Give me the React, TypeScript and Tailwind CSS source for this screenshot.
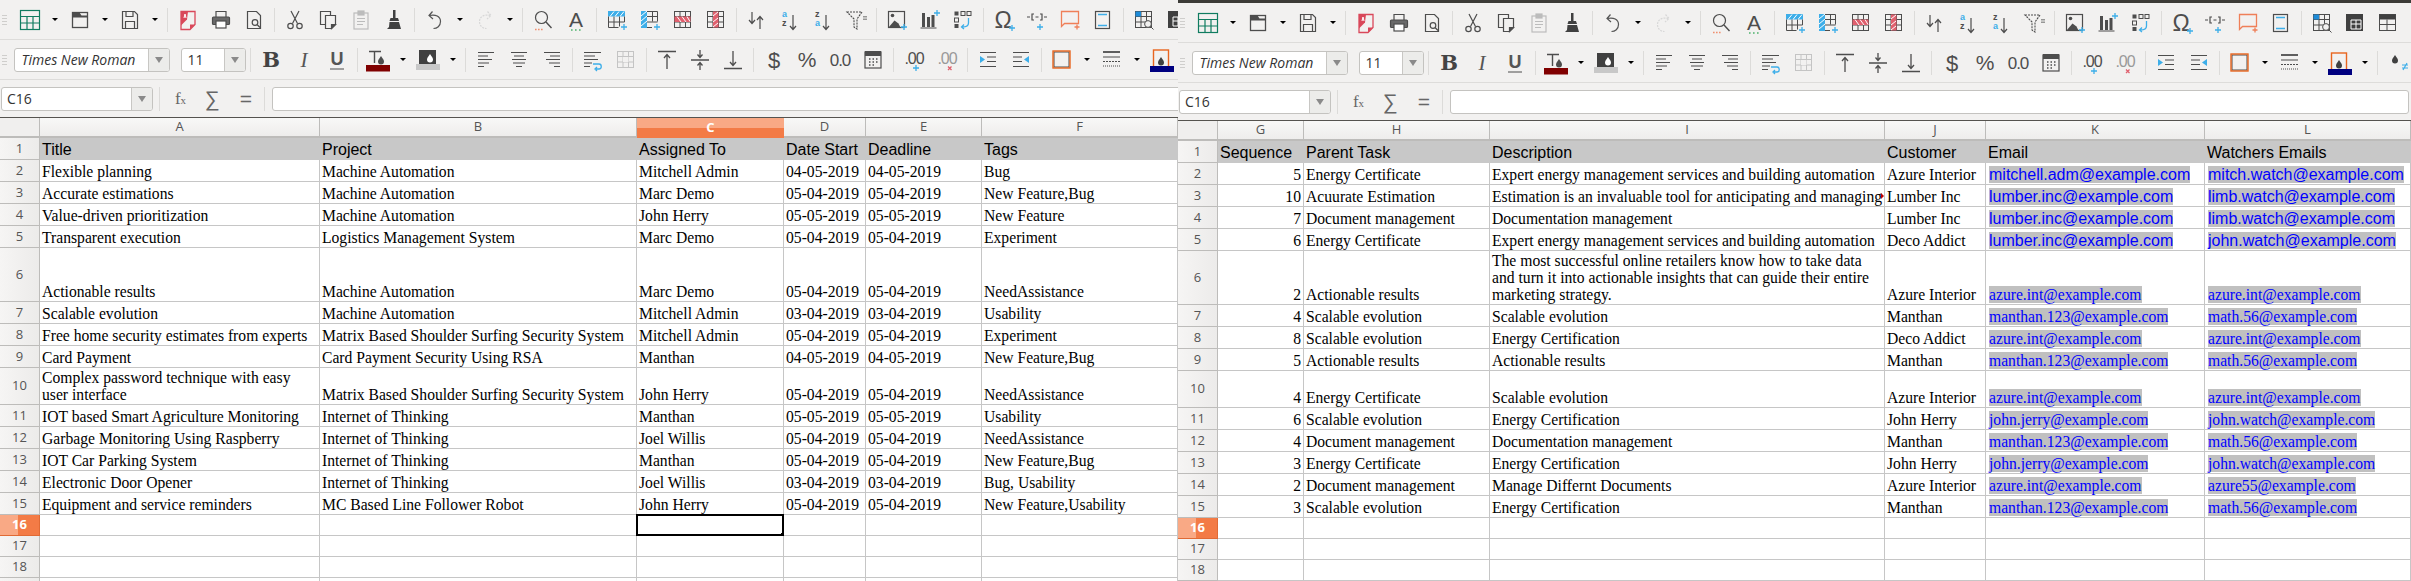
import type { ReactNode } from "react"

const D = "#4d4d4d"
const B = "#3daee9"
const R = "#e0606e"

const Plus = ({ x, y }: { x: number; y: number }) => (
  <path d={`M${x - 3} ${y}h6M${x} ${y - 3}v6`} stroke={B} strokeWidth="1.3" fill="none" />
)

const Gridlines = ({ color = D }: { color?: string }) => (
  <g stroke={color} strokeWidth="1" fill="none">
    <rect x="3.5" y="3.5" width="16" height="16" />
    <path d="M3.5 8.5h16M3.5 14h16M9 3.5v16M14.5 3.5v16" />
  </g>
)

const Lines = ({ rows }: { rows: string[] }) => (
  <path d={rows.join("")} stroke={D} strokeWidth="1.2" fill="none" />
)

const Drop = ({ x, y, c }: { x: number; y: number; c: string }) => (
  <path d={`M${x} ${y}c2 3 3 4 3 5.500a3 3 0 0 1-6 0c0-1.500 1-2.500 3-5.500z`} fill={c} />
)

const icons: Record<string, ReactNode> = {
  table: (
    <g stroke="#107c60" strokeWidth="1.2" fill="none">
      <rect x="2.500" y="2.500" width="19" height="19" />
      <path d="M2.500 8.500h19M2.500 15h19M9 8.500v13M15 8.500v13" />
    </g>
  ),
  open: (
    <g>
      <rect x="4.500" y="4.500" width="15" height="15" stroke={D} fill="none" strokeWidth="1.300" />
      <path d="M4.500 4.500h7l2 3h6v2h-15z" fill={D} />
    </g>
  ),
  save: (
    <g stroke={D} strokeWidth="1.200" fill="none">
      <path d="M4.500 3.500h12l3 3v14h-15z" />
      <path d="M8 3.500v5h7v-5M7.500 20.500v-7h9v7" />
    </g>
  ),
  pdf: (
    <g>
      <path d="M5 3.500h14v13l-5 5H5z" fill="none" stroke="#d9485a" strokeWidth="1.300" />
      <path d="M5 3.500h7l-1 8-6 6z" fill="#d9485a" />
      <path d="M8 10l1-4 1 4" stroke="#fff" fill="none" />
      <path d="M14 21.500v-5h5z" fill="#d9485a" />
    </g>
  ),
  print: (
    <g stroke={D} strokeWidth="1.200" fill="none">
      <path d="M7 9V3.500h10V9" />
      <rect x="3.500" y="9" width="17" height="7.500" rx="1" fill="#6a6a6a" />
      <rect x="7" y="13" width="10" height="7" fill="#fff" />
    </g>
  ),
  preview: (
    <g stroke={D} strokeWidth="1.200" fill="none">
      <path d="M5.500 3.500h9l4 4v13h-13z" />
      <circle cx="13" cy="14.500" r="2.800" />
      <path d="M15 16.500l3 3" />
    </g>
  ),
  cut: (
    <g stroke={D} strokeWidth="1.200" fill="none">
      <path d="M8 3l6.500 12.500M16 3L9.500 15.500" />
      <circle cx="7.500" cy="18" r="2.700" />
      <circle cx="16.500" cy="18" r="2.700" />
    </g>
  ),
  copy: (
    <g stroke={D} strokeWidth="1.200" fill="none">
      <path d="M9 16.500H4.500v-13h10v4" />
      <path d="M9.500 7.500h10v9l-4 4h-6z" fill="#f2f1f0" />
      <path d="M15.500 20.500v-4h4z" fill={D} />
    </g>
  ),
  paste: (
    <g stroke="#bcbcbc" strokeWidth="1.200" fill="none">
      <rect x="5" y="5" width="14" height="16" />
      <rect x="9" y="3" width="6" height="4" fill="#bcbcbc" />
      <path d="M8 10.500h8M8 13.500h8M8 16.500h6" />
    </g>
  ),
  clone: (
    <g fill="#404040">
      <rect x="11" y="2" width="2.500" height="8" />
      <path d="M8.500 10h7.500l1 3H7.500z" />
      <path d="M7.500 14H17l2 7H5l2-2z" />
    </g>
  ),
  undo: <path d="M9.500 3.500L6 7.500l4 3.500M6.500 7.500c6-1.500 11 1 11 6 0 4.500-3.500 7-7 7" stroke="#555" strokeWidth="1.200" fill="none" />,
  redo: <path d="M14.500 3.500L18 7.500l-4 3.500M17.500 7.500c-6-1.500-11 1-11 6 0 4.500 3.500 7 7 7" stroke="#d8d8d8" strokeWidth="1.200" fill="none" strokeDasharray="2 1" />,
  find: (
    <g>
      <circle cx="10.500" cy="9.500" r="6" stroke={D} strokeWidth="1.200" fill="none" />
      <path d="M15 14l5.500 6" stroke={D} strokeWidth="1.400" />
      <path d="M4 21.500h1.600M7 21.500h1.600M10 21.500h1.600" stroke="#f0906f" strokeWidth="1.600" />
    </g>
  ),
  spell: (
    <g>
      <text x="12" y="19" textAnchor="middle" fontSize="21" fontFamily="Liberation Sans" fill={D}>A</text>
      <path d="M7 22h1.600M11 22h1.600M15 22h1.600" stroke="#4fb36d" strokeWidth="1.600" />
    </g>
  ),
  rowIns: (
    <g>
      <rect x="3" y="3" width="17" height="5.500" fill={B} />
      <path d="M5 8.500l4-5M10 8.500l4-5M15 8.500l4-5" stroke="#fff" />
      <path d="M3.500 8.500v11h10M19.500 8.500V14M3.500 14h16M9 8.500v11M14.500 8.500v10" stroke={D} fill="none" />
      <Plus x={19} y={19} />
    </g>
  ),
  colIns: (
    <g>
      <rect x="3" y="3" width="6" height="17" fill={B} />
      <path d="M3 8l6-5M3 13l6-5M3 18l6-5" stroke="#fff" />
      <path d="M9 3.500h10.500v10M9 19.500h5M9 8.500h10.500M9 14h10.500M14.500 3.500v10" stroke={D} fill="none" />
      <Plus x={19} y={19} />
    </g>
  ),
  rowDel: (
    <g>
      <Gridlines />
      <rect x="3.500" y="8.500" width="16" height="5.500" fill={R} />
      <path d="M6 8.500l4 5.500M11 8.500l4 5.500M16 8.500l3 5" stroke="#fff" />
    </g>
  ),
  colDel: (
    <g>
      <Gridlines />
      <rect x="9" y="3.500" width="5.500" height="16" fill={R} />
      <path d="M9 8l5-4M9 14l5-4M9 19l5-4" stroke="#fff" />
    </g>
  ),
  sort: <path d="M7 4v11M4 12l3 3.500 3-3.500M15 21V9M12 12l3-3.500 3 3.500" stroke={D} strokeWidth="1.200" fill="none" />,
  sortAz: (
    <g fontFamily="Liberation Sans" fontSize="9" fontWeight="700">
      <text x="4" y="9" fill={B}>a</text>
      <text x="4" y="18" fill={D}>z</text>
      <path d="M15 7v14M12 18l3 3.500 3-3.500" stroke={D} strokeWidth="1.200" fill="none" />
    </g>
  ),
  sortZa: (
    <g fontFamily="Liberation Sans" fontSize="9" fontWeight="700">
      <text x="4" y="9" fill={D}>z</text>
      <text x="4" y="18" fill={B}>a</text>
      <path d="M15 7v14M12 18l3 3.500 3-3.500" stroke={D} strokeWidth="1.200" fill="none" />
    </g>
  ),
  filter: (
    <g stroke={D} strokeWidth="1.100" fill="none">
      <path d="M3 4h15l-5 7v10l-3-2v-8z" strokeDasharray="2 1" />
      <path d="M20 8v4M22 8v4" strokeDasharray="1.500 1" />
    </g>
  ),
  image: (
    <g>
      <rect x="3.500" y="3.500" width="16" height="16" stroke={D} fill="none" strokeWidth="1.200" />
      <circle cx="7.500" cy="7.500" r="1.800" fill={D} />
      <path d="M3.500 19.500l6-7 4 3 2 4z" fill={D} />
      <Plus x={19} y={19} />
    </g>
  ),
  chart: (
    <g fill={D}>
      <rect x="4" y="5" width="3" height="14" />
      <rect x="9" y="9" width="3" height="10" />
      <rect x="13.500" y="7" width="3" height="12" />
      <rect x="2.500" y="19.500" width="16" height="1" />
      <Plus x={19} y={5} />
    </g>
  ),
  pivot: (
    <g fill={D}>
      <rect x="3.500" y="3.500" width="4" height="4" />
      <rect x="10" y="3.500" width="4" height="4" stroke={D} fill="none" />
      <rect x="16" y="3.500" width="4" height="4" stroke={D} fill="none" />
      <rect x="3.500" y="10" width="4" height="4" stroke={D} fill="none" />
      <rect x="3.500" y="16" width="4" height="4" />
      <path d="M17.500 10v5c0 3-2 4-6 4M13 16.500l-2.500 2.500 2.500 2" stroke={B} strokeWidth="1.300" fill="none" />
    </g>
  ),
  omega: (
    <g>
      <text x="11" y="20" textAnchor="middle" fontSize="23" fontFamily="Liberation Sans" fill={D}>Ω</text>
      <Plus x={20} y={20} />
    </g>
  ),
  link: (
    <g>
      <path d="M2 9h3M19 9h3M9 6H7v6h2M15 6h2v6h-2M10.500 9h3" stroke={D} strokeWidth="1.200" fill="none" />
      <Plus x={15} y={19} />
    </g>
  ),
  comment: (
    <g>
      <path d="M3.500 3.500h17v12h-14l-3 3z" stroke="#ef7f58" strokeWidth="1.300" fill="none" />
      <path d="M16.500 19h5M19 16.500v5" stroke="#ef7f58" strokeWidth="1.300" />
    </g>
  ),
  headerfoot: (
    <g>
      <rect x="4.500" y="3.500" width="14" height="17" stroke={D} strokeWidth="1.200" fill="none" />
      <path d="M7 6.500h9M7 17.500h9" stroke={B} strokeWidth="1.300" />
    </g>
  ),
  defname: (
    <g>
      <Gridlines />
      <rect x="3.500" y="3.500" width="5.500" height="5" fill="#1e8bd8" />
      <circle cx="16" cy="16" r="3.400" stroke={D} fill="#f2f1f0" />
      <path d="M18.500 18.500l3 3" stroke={D} />
    </g>
  ),
  freeze: (
    <g>
      <rect x="3" y="3" width="17" height="17" fill="#404040" />
      <path d="M8 9h10v9H8zM8 13h10M13 9v9" stroke="#fff" fill="none" />
    </g>
  ),
  split: (
    <g>
      <rect x="3.500" y="3.500" width="16" height="16" stroke={D} fill="none" />
      <rect x="3.500" y="3.500" width="16" height="5" fill="#404040" />
      <path d="M3.500 13.500h16M11 8.500v11" stroke={D} />
    </g>
  ),
  bold: <text x="12" y="19" textAnchor="middle" fontSize="21" fontWeight="700" fontFamily="DejaVu Serif" fill="#444">B</text>,
  italic: <text x="12" y="19" textAnchor="middle" fontSize="21" fontStyle="italic" fontFamily="Liberation Serif" fill="#555">I</text>,
  underline: (
    <g>
      <text x="12" y="17" textAnchor="middle" fontSize="18" fontWeight="700" fontFamily="Liberation Sans" fill="#555">U</text>
      <path d="M5 21h14" stroke={D} />
    </g>
  ),
  fontColor: (
    <g>
      <path d="M3 3.500h12M8.500 3.500V15" stroke={D} strokeWidth="1.400" />
      <Drop x={15} y={8} c={D} />
      <rect x="0" y="17" width="24" height="6.500" fill="#800000" />
    </g>
  ),
  bgColor: (
    <g>
      <rect x="3" y="2" width="17" height="14" fill="#404040" />
      <Drop x={14} y={6} c="#fff" />
      <rect x="0" y="16" width="24" height="6" fill="#c8c8c8" />
    </g>
  ),
  left: <Lines rows={["M4 4.500h16", "M4 8h10", "M4 11.500h14", "M4 15h11", "M4 18.500h6"]} />,
  center: <Lines rows={["M4 4.500h16", "M7 8h10", "M5 11.500h14", "M6 15h12", "M9 18.500h6"]} />,
  right: <Lines rows={["M4 4.500h16", "M10 8h10", "M6 11.500h14", "M9 15h11", "M14 18.500h6"]} />,
  wrap: (
    <g>
      <Lines rows={["M3 4.500h17", "M3 8h11", "M3 11.500h14", "M3 15h8", "M3 18.500h6"]} />
      <path d="M12 16h6c3 0 3 5 0 5h-3M16 19l-2 2 2 2" stroke={B} strokeWidth="1.300" fill="none" />
    </g>
  ),
  merge: (
    <g>
      <Gridlines color="#c4c4c4" />
      <path d="M9 9h5.500v5H9z" fill="#f2f1f0" />
    </g>
  ),
  vtop: <path d="M3 3.500h18M12 21V7M9 10l3-3.500 3 3.500" stroke={D} strokeWidth="1.300" fill="none" />,
  vmid: <path d="M3 12h18M12 2v7M9.500 6.500L12 9.500l2.500-3M12 22v-7M9.500 17.500l2.500-3 2.500 3" stroke={D} strokeWidth="1.300" fill="none" />,
  vbot: <path d="M3 20.500h18M12 3v14M9 14l3 3.500 3-3.500" stroke={D} strokeWidth="1.300" fill="none" />,
  dollar: <text x="12" y="20" textAnchor="middle" fontSize="22" fontFamily="Liberation Sans" fill={D}>$</text>,
  percent: <text x="12" y="19" textAnchor="middle" fontSize="21" fontFamily="Liberation Sans" fill={D}>%</text>,
  number: <text x="12" y="18" textAnchor="middle" fontSize="17" letterSpacing="-1" fontFamily="Liberation Sans" fill={D}>0.0</text>,
  date: (
    <g>
      <rect x="4" y="4" width="16" height="16" stroke={D} strokeWidth="1.200" fill="none" />
      <rect x="4" y="3" width="16" height="5" fill={D} />
      <path d="M8 11h1.500M11.500 11H13M15 11h1.500M8 14h1.500M11.500 14H13M15 14h1.500M8 17h1.500M11.500 17H13" stroke={D} strokeWidth="1.500" />
    </g>
  ),
  addDec: (
    <g>
      <text x="12" y="16" textAnchor="middle" fontSize="16" letterSpacing="-1" fontFamily="Liberation Sans" fill={D}>.00</text>
      <Plus x={14} y={20} />
    </g>
  ),
  delDec: (
    <g>
      <text x="12" y="16" textAnchor="middle" fontSize="16" letterSpacing="-1" fontFamily="Liberation Sans" fill="#999">.00</text>
      <path d="M13 18.500l3.500 3.500M16.500 18.500L13 22" stroke="#e0606e" strokeWidth="1.300" />
    </g>
  ),
  indent: (
    <g>
      <Lines rows={["M4 4.500h16", "M11 9h9", "M11 13.500h9", "M4 18.500h16"]} />
      <path d="M4 8l5 3.500-5 3.500z" fill={B} />
    </g>
  ),
  outdent: (
    <g>
      <Lines rows={["M4 4.500h16", "M4 9h9", "M4 13.500h9", "M4 18.500h16"]} />
      <path d="M20 8l-5 3.500 5 3.500z" fill={B} />
    </g>
  ),
  border: (
    <g>
      <rect x="4" y="4" width="15" height="15" fill="none" stroke={D} />
      <rect x="3" y="3" width="17" height="17" fill="none" stroke="#e8651f" strokeWidth="1.400" />
    </g>
  ),
  lineStyle: (
    <g>
      <path d="M3 4h17" stroke={D} strokeWidth="1.800" />
      <path d="M3 9h17" stroke={D} />
      <path d="M3 13.500h17" stroke={D} strokeDasharray="2 1" />
      <path d="M3 18h17" stroke={D} strokeDasharray="1 1" />
    </g>
  ),
  cellBg: (
    <g>
      <rect x="3.500" y="2" width="15" height="17" fill="none" stroke="#e8651f" strokeWidth="1.400" />
      <Drop x={11} y={9} c="#404040" />
      <rect x="0" y="18" width="24" height="6" fill="#000080" />
    </g>
  ),
  cond: (
    <g>
      <Drop x={9} y={4} c="#404040" />
      <path d="M16 14h6M16 17h6M21 12l-4 7" stroke={B} strokeWidth="1.200" fill="none" />
    </g>
  ),
}

const topBar = [
  "table", "dd", "open", "dd", "save", "dd", "sep", "pdf", "print", "preview", "sep", "cut", "copy", "paste", "clone", "sep",
  "undo", "dd", "redo", "dd", "sep", "find", "spell", "sep", "rowIns", "colIns", "rowDel", "colDel", "sep",
  "sort", "sortAz", "sortZa", "filter", "sep", "image", "chart", "pivot", "sep", "omega", "link", "comment", "headerfoot", "sep",
  "defname", "freeze", "split",
]

const formatBar = [
  "bold", "italic", "underline", "sep", "fontColor", "dd", "bgColor", "dd", "sep", "left", "center", "right", "sep", "wrap", "merge", "sep",
  "vtop", "vmid", "vbot", "sep", "dollar", "percent", "number", "date", "sep", "addDec", "delDec", "sep", "indent", "outdent", "sep",
  "border", "dd", "lineStyle", "dd", "cellBg", "dd", "sep", "cond",
]

function ToolItem({ name }: { name: string }) {
  if (name === "sep") {
    return (
      <div className="w-[8px] shrink-0 flex justify-center">
        <div className="w-px h-[24px] bg-[#dcdbd9]" />
      </div>
    )
  }
  if (name === "dd") {
    return (
      <div className="w-[17px] shrink-0 flex justify-center">
        <div className="w-0 h-0 border-l-[3px] border-r-[3px] border-t-[3px] border-l-transparent border-r-transparent border-t-black" />
      </div>
    )
  }
  return (
    <div className="w-[33px] shrink-0 flex justify-center">
      <svg width="24" height="24" viewBox="0 0 24 24" className="block overflow-visible">{icons[name]}</svg>
    </div>
  )
}

function Grip() {
  return (
    <div className="w-[13.5px] shrink-0 flex flex-col gap-[2px] items-start pl-[2px]">
      <div className="w-[5px] h-px bg-[#cfcecc]" />
      <div className="w-[5px] h-px bg-[#cfcecc]" />
      <div className="w-[5px] h-px bg-[#cfcecc]" />
      <div className="w-[5px] h-px bg-[#cfcecc]" />
    </div>
  )
}

function ComboArrow({ w }: { w: string }) {
  return (
    <div className={`${w} self-stretch flex items-center justify-center border-l border-[#c8c7c4] bg-[#ececea]`}>
      <div className="w-0 h-0 border-l-[4px] border-r-[4px] border-t-[6px] border-l-transparent border-r-transparent border-t-[#8a8a8a]" />
    </div>
  )
}

function Toolbars({ clipInput }: { clipInput: boolean }) {
  return (
    <div className="bg-[#f2f1f0] font-['Open_Sans',sans-serif]">
      <div className="h-[40px] flex items-center border-b border-[#dddcda] overflow-hidden">
        <Grip />
        {topBar.map((name, i) => (
          <ToolItem key={i} name={name} />
        ))}
      </div>
      <div className="h-[40px] flex items-center border-b border-[#dddcda] overflow-hidden">
        <Grip />
        <div className="w-[156px] h-[24px] shrink-0 flex items-center bg-white border border-[#c4c3c0] rounded-[3px] overflow-hidden">
          <span className="flex-1 pl-[7px] text-[14px] italic text-[#333] whitespace-nowrap">Times New Roman</span>
          <ComboArrow w="w-[21px]" />
        </div>
        <div className="w-[65px] h-[24px] ml-[11px] shrink-0 flex items-center bg-white border border-[#c4c3c0] rounded-[3px] overflow-hidden">
          <span className="flex-1 pl-[6px] text-[14px] text-[#333]">11</span>
          <ComboArrow w="w-[21px]" />
        </div>
        <div className="w-[9px] shrink-0 flex justify-center">
          <div className="w-px h-[24px] bg-[#dcdbd9]" />
        </div>
        {formatBar.map((name, i) => (
          <ToolItem key={i} name={name} />
        ))}
      </div>
      <div className="h-[37px] flex items-center pl-px overflow-hidden">
        <div className="w-[152px] h-[24px] shrink-0 flex items-center bg-white border border-[#c4c3c0] rounded-[3px] overflow-hidden">
          <span className="flex-1 pl-[5px] text-[14px] text-[#333]">C16</span>
          <ComboArrow w="w-[21px]" />
        </div>
        <div className="w-px h-[24px] ml-[6px] shrink-0 bg-[#dcdbd9]" />
        <div className="w-[41px] shrink-0 text-center text-[#666] text-[17px] leading-none font-['Liberation_Serif',serif]">
          f<span className="text-[11px]">x</span>
        </div>
        <div className="w-[22px] shrink-0 text-center text-[#666] text-[21px] leading-none font-['Liberation_Sans',sans-serif]">∑</div>
        <div className="w-[41px] shrink-0 pl-[5px] text-center text-[#666] text-[21px] leading-none font-['Liberation_Sans',sans-serif]">=</div>
        <div className="w-px h-[24px] shrink-0 bg-[#dcdbd9]" />
        {clipInput ? (
          <div className="w-[1000px] shrink-0 h-[24px] ml-[7px] bg-white border border-[#c4c3c0] rounded-[3px]" />
        ) : (
          <div className="flex-1 h-[24px] ml-[7px] mr-[2px] bg-white border border-[#c4c3c0] rounded-[3px]" />
        )}
      </div>
    </div>
  )
}

type Row = { h: string; cells: ReactNode[] }

const SERIF = "font-['Liberation_Serif',serif] text-[15.65px]"
const SANS = "font-['Liberation_Sans',sans-serif] text-[16px]"

const Mail = ({ v, sans }: { v: string; sans?: boolean }) => (
  <span className={`inline-block ml-px bg-[#c0c0c0] text-[#0000ff] leading-[17px] ${sans ? SANS : SERIF}`}>{v}@example.com</span>
)

const Num = ({ v }: { v: number }) => <span className="block w-full text-right">{v}</span>

const H22 = "h-[22px]"

const leftCols = ["w-[280px]", "w-[317px]", "w-[147px]", "w-[82px]", "w-[116px]", "w-[196px]"]
const rightCols = ["w-[86px]", "w-[186px]", "w-[395px]", "w-[101px]", "w-[219px]", "w-[206px]"]

const leftRows: Row[] = [
  { h: H22, cells: ["Flexible planning", "Machine Automation", "Mitchell Admin", "04-05-2019", "04-05-2019", "Bug"] },
  { h: H22, cells: ["Accurate estimations", "Machine Automation", "Marc Demo", "05-04-2019", "05-04-2019", "New Feature,Bug"] },
  { h: H22, cells: ["Value-driven prioritization", "Machine Automation", "John Herry", "05-05-2019", "05-05-2019", "New Feature"] },
  { h: H22, cells: ["Transparent execution", "Logistics Management System", "Marc Demo", "05-04-2019", "05-04-2019", "Experiment"] },
  { h: "h-[54px]", cells: ["Actionable results", "Machine Automation", "Marc Demo", "05-04-2019", "05-04-2019", "NeedAssistance"] },
  { h: H22, cells: ["Scalable evolution", "Machine Automation", "Mitchell Admin", "03-04-2019", "03-04-2019", "Usability"] },
  { h: H22, cells: ["Free home security estimates from experts", "Matrix Based Shoulder Surfing Security System", "Mitchell Admin", "05-04-2019", "05-04-2019", "Experiment"] },
  { h: H22, cells: ["Card Payment", "Card Payment Security Using RSA", "Manthan", "04-05-2019", "04-05-2019", "New Feature,Bug"] },
  {
    h: "h-[37px]",
    cells: [
      <>Complex password technique with easy<br />user interface</>,
      "Matrix Based Shoulder Surfing Security System", "John Herry", "05-04-2019", "05-04-2019", "NeedAssistance",
    ],
  },
  { h: H22, cells: ["IOT based Smart Agriculture Monitoring", "Internet of Thinking", "Manthan", "05-05-2019", "05-05-2019", "Usability"] },
  { h: H22, cells: ["Garbage Monitoring Using Raspberry", "Internet of Thinking", "Joel Willis", "05-04-2019", "05-04-2019", "NeedAssistance"] },
  { h: H22, cells: ["IOT Car Parking System", "Internet of Thinking", "Manthan", "05-04-2019", "05-04-2019", "New Feature,Bug"] },
  { h: H22, cells: ["Electronic Door Opener", "Internet of Thinking", "Joel Willis", "03-04-2019", "03-04-2019", "Bug, Usability"] },
  { h: H22, cells: ["Equipment and service reminders", "MC Based Line Follower Robot", "John Herry", "05-04-2019", "05-04-2019", "New Feature,Usability"] },
]

const expert = "Expert energy management services and building automation"

const rr = (n: number, parent: ReactNode, desc: ReactNode, cust: string, mail: string, watch: string, sans = false, h = H22): Row => ({
  h,
  cells: [<Num v={n} />, parent, desc, cust, <Mail v={mail} sans={sans} />, <Mail v={watch} sans={sans} />],
})

const rightRows: Row[] = [
  rr(5, "Energy Certificate", expert, "Azure Interior", "mitchell.adm", "mitch.watch", true),
  rr(
    10,
    "Acuurate Estimation",
    <>
      Estimation is an invaluable tool for anticipating and managing
      <span className="absolute right-0 top-[8px] w-0 h-0 border-y-[3px] border-l-[3px] border-y-transparent border-l-[#c00000]" />
    </>,
    "Lumber Inc", "lumber.inc", "limb.watch", true,
  ),
  rr(7, "Document management", "Documentation management", "Lumber Inc", "lumber.inc", "limb.watch", true),
  rr(6, "Energy Certificate", expert, "Deco Addict", "lumber.inc", "john.watch", true),
  rr(
    2,
    "Actionable results",
    <>
      The most successful online retailers know how to take data<br />
      and turn it into actionable insights that can guide their entire<br />
      marketing strategy.
    </>,
    "Azure Interior", "azure.int", "azure.int", false, "h-[54px]",
  ),
  rr(4, "Scalable evolution", "Scalable evolution", "Manthan", "manthan.123", "math.56"),
  rr(8, "Scalable evolution", "Energy Certification", "Deco Addict", "azure.int", "azure.int"),
  rr(5, "Actionable results", "Actionable results", "Manthan", "manthan.123", "math.56"),
  rr(4, "Energy Certificate", "Scalable evolution", "Azure Interior", "azure.int", "azure.int", false, "h-[37px]"),
  rr(6, "Scalable evolution", "Energy Certification", "John Herry", "john.jerry", "john.watch"),
  rr(4, "Document management", "Documentation management", "Manthan", "manthan.123", "math.56"),
  rr(3, "Energy Certificate", "Energy Certification", "John Herry", "john.jerry", "john.watch"),
  rr(2, "Document management", "Manage Differnt Documents", "Azure Interior", "azure.int", "azure55"),
  rr(3, "Scalable evolution", "Energy Certification", "Manthan", "manthan.123", "math.56"),
]

const HDR = "font-['Open_Sans',sans-serif] text-[13px] text-[#555]"

function RowHead({ n, h }: { n: number; h: string }) {
  if (n === 16) {
    return (
      <div className={`w-[40px] ${h} shrink-0 flex border-b border-r border-[#e06a35] relative`}>
        <div className="w-[18px] bg-[#f9a985]" />
        <div className="flex-1 bg-[#f37b46]" />
        <span className="absolute inset-0 flex items-center justify-center font-['Open_Sans',sans-serif] text-[13px] font-bold text-white">16</span>
      </div>
    )
  }
  return (
    <div className={`w-[40px] ${h} shrink-0 flex items-center justify-center bg-gradient-to-r from-[#f6f5f4] to-[#ecebea] border-b border-r border-[#bdbcba] ${HDR}`}>
      {n < 19 ? n : ""}
    </div>
  )
}

function Sheet({ letters, cols, headers, rows, activeCol, selected }: {
  letters: string[]
  cols: string[]
  headers: string[]
  rows: Row[]
  activeCol?: number
  selected?: number
}) {
  return (
    <div className="border-t border-[#55534f]">
      <div className="h-[20px] flex">
        <div className="w-[40px] shrink-0 bg-[#f0efee] border-r border-b-2 border-[#bdbcba]" />
        {letters.map((l, i) =>
          i === activeCol ? (
            <div key={l} className={`${cols[i]} shrink-0 relative flex flex-col`}>
              <div className="h-[10px] bg-[#f9a985]" />
              <div className="flex-1 bg-[#f37b46]" />
              <span className="absolute inset-0 flex items-center justify-center font-['Open_Sans',sans-serif] text-[13px] font-bold text-white">{l}</span>
            </div>
          ) : (
            <div key={l} className={`${cols[i]} shrink-0 flex items-center justify-center bg-gradient-to-b from-[#f8f8f7] to-[#eeedec] border-r border-b-2 border-[#bdbcba] ${HDR}`}>
              {l}
            </div>
          ),
        )}
      </div>
      <div className="h-[22px] flex">
        <RowHead n={1} h="h-[22px]" />
        {headers.map((t, i) => (
          <div key={t} className={`${cols[i]} shrink-0 flex items-end pl-[2px] pb-[2px] bg-[#c8c8c8] leading-[17px] text-black whitespace-nowrap overflow-hidden ${SANS}`}>
            {t}
          </div>
        ))}
      </div>
      {rows.map((row, r) => (
        <div key={r} className={`${row.h} flex`}>
          <RowHead n={r + 2} h={row.h} />
          {row.cells.map((c, i) => (
            <div key={i} className={`${cols[i]} shrink-0 relative flex items-end px-[2px] pb-[1px] bg-white border-r border-b border-[#c6c6c6] leading-[17px] text-black whitespace-nowrap overflow-hidden ${SERIF}`}>
              <div className="w-full">{c}</div>
            </div>
          ))}
        </div>
      ))}
      {[16, 17, 18, 19].map((n) => (
        <div key={n} className="h-[21px] flex">
          <RowHead n={n} h="h-[21px]" />
          {cols.map((c, i) => (
            <div key={i} className={`${c} shrink-0 relative bg-white border-r border-b border-[#c6c6c6]`}>
              {n === 16 && i === selected && (
                <>
                  <div className="absolute -left-px -top-px -right-px -bottom-px border-2 border-black" />
                  <div className="absolute -right-[3px] -bottom-[3px] w-[5px] h-[5px] bg-black" />
                </>
              )}
            </div>
          ))}
        </div>
      ))}
    </div>
  )
}

export default function App() {
  return (
    <div className="w-[2411px] h-[581px] flex overflow-hidden bg-white">
      <div className="w-[1178px] h-full shrink-0 overflow-hidden">
        <Toolbars clipInput />
        <Sheet
          letters={["A", "B", "C", "D", "E", "F"]}
          cols={leftCols}
          headers={["Title", "Project", "Assigned To", "Date Start", "Deadline", "Tags"]}
          rows={leftRows}
          activeCol={2}
          selected={2}
        />
      </div>
      <div className="flex-1 h-full overflow-hidden border-t-[3px] border-[#3c3b37]">
        <Toolbars clipInput={false} />
        <Sheet
          letters={["G", "H", "I", "J", "K", "L"]}
          cols={rightCols}
          headers={["Sequence", "Parent Task", "Description", "Customer", "Email", "Watchers Emails"]}
          rows={rightRows}
        />
      </div>
    </div>
  )
}
